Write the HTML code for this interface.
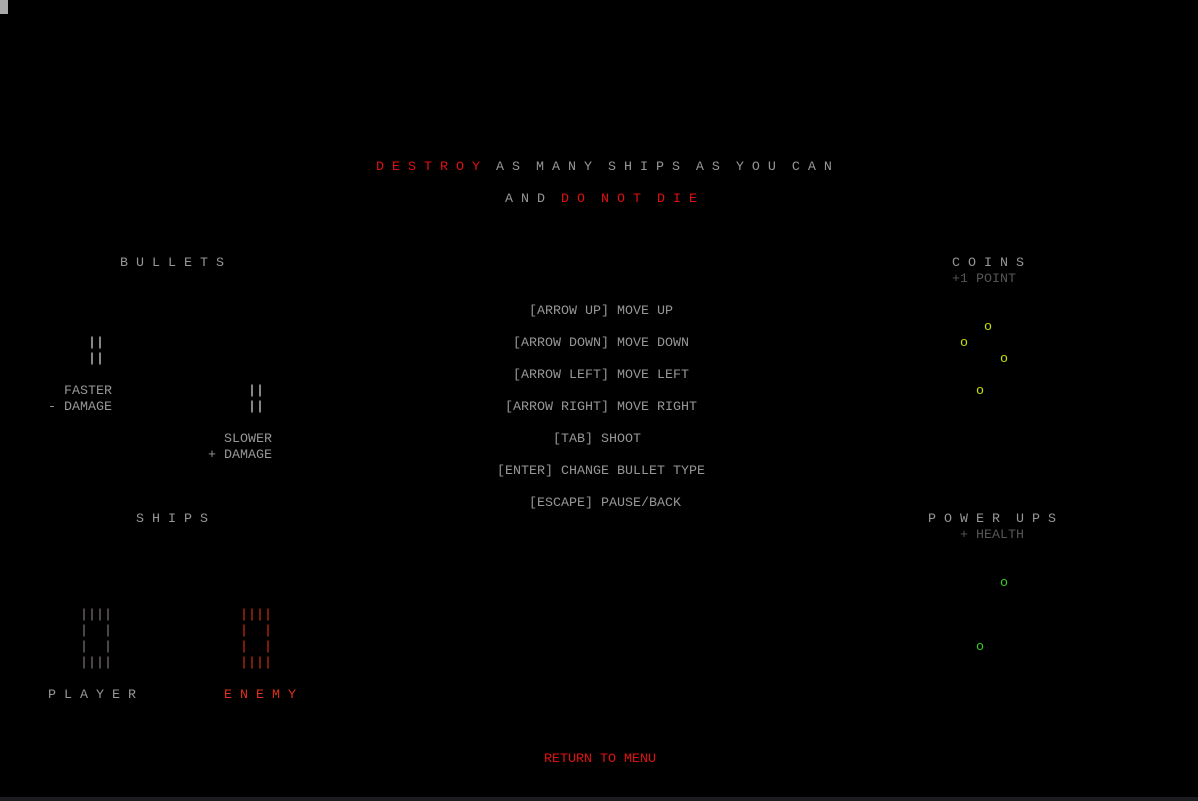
<!DOCTYPE html>
<html><head><meta charset="utf-8"><style>
html,body{margin:0;padding:0;background:#000;width:1198px;height:801px;overflow:hidden;position:relative}
.t{position:absolute;font-family:"Liberation Mono",monospace;font-size:13.33px;line-height:16px;height:16px;white-space:pre;color:#969696;margin-top:2px}
.r{color:#e01010}.w{color:#eee}.d{color:#555}.y{color:#c8e000}.g{color:#30d020}.e{color:#e03018}.p{color:#8a8080}
</style></head><body>
<div style="position:absolute;left:0;top:0;width:8px;height:14px;background:#aaa"></div>
<div style="position:absolute;left:0;top:797px;width:1198px;height:4px;background:#1a1c20"></div>
<div class="t" style="left:376px;top:158px"><span class="r">D E S T R O Y</span>  A S  M A N Y  S H I P S  A S  Y O U  C A N</div>
<div class="t" style="left:505px;top:190px">A N D  <span class="r">D O  N O T  D I E</span></div>
<div class="t" style="left:120px;top:254px">B U L L E T S</div>
<div class="t" style="left:952px;top:254px">C O I N S</div>
<div class="t d" style="left:952px;top:270px">+1 POINT</div>
<div class="t" style="left:529px;top:302px">[ARROW UP] MOVE UP</div>
<div class="t" style="left:513px;top:334px">[ARROW DOWN] MOVE DOWN</div>
<div class="t" style="left:513px;top:366px">[ARROW LEFT] MOVE LEFT</div>
<div class="t" style="left:505px;top:398px">[ARROW RIGHT] MOVE RIGHT</div>
<div class="t" style="left:553px;top:430px">[TAB] SHOOT</div>
<div class="t" style="left:497px;top:462px">[ENTER] CHANGE BULLET TYPE</div>
<div class="t" style="left:529px;top:494px">[ESCAPE] PAUSE/BACK</div>
<div class="t w" style="left:88px;top:334px">||</div>
<div class="t w" style="left:88px;top:350px">||</div>
<div class="t" style="left:64px;top:382px">FASTER</div>
<div class="t" style="left:48px;top:398px">- DAMAGE</div>
<div class="t w" style="left:248px;top:382px">||</div>
<div class="t w" style="left:248px;top:398px">||</div>
<div class="t" style="left:224px;top:430px">SLOWER</div>
<div class="t" style="left:208px;top:446px">+ DAMAGE</div>
<div class="t y" style="left:984px;top:318px">o</div>
<div class="t y" style="left:960px;top:334px">o</div>
<div class="t y" style="left:1000px;top:350px">o</div>
<div class="t y" style="left:976px;top:382px">o</div>
<div class="t" style="left:136px;top:510px">S H I P S</div>
<div class="t" style="left:928px;top:510px">P O W E R  U P S</div>
<div class="t d" style="left:960px;top:526px">+ HEALTH</div>
<div class="t g" style="left:1000px;top:574px">o</div>
<div class="t g" style="left:976px;top:638px">o</div>
<div class="t p" style="left:80px;top:606px">||||</div>
<div class="t p" style="left:80px;top:622px">|  |</div>
<div class="t p" style="left:80px;top:638px">|  |</div>
<div class="t p" style="left:80px;top:654px">||||</div>
<div class="t e" style="left:240px;top:606px">||||</div>
<div class="t e" style="left:240px;top:622px">|  |</div>
<div class="t e" style="left:240px;top:638px">|  |</div>
<div class="t e" style="left:240px;top:654px">||||</div>
<div class="t" style="left:48px;top:686px">P L A Y E R</div>
<div class="t e" style="left:224px;top:686px">E N E M Y</div>
<div class="t r" style="left:544px;top:750px">RETURN TO MENU</div>
</body></html>
